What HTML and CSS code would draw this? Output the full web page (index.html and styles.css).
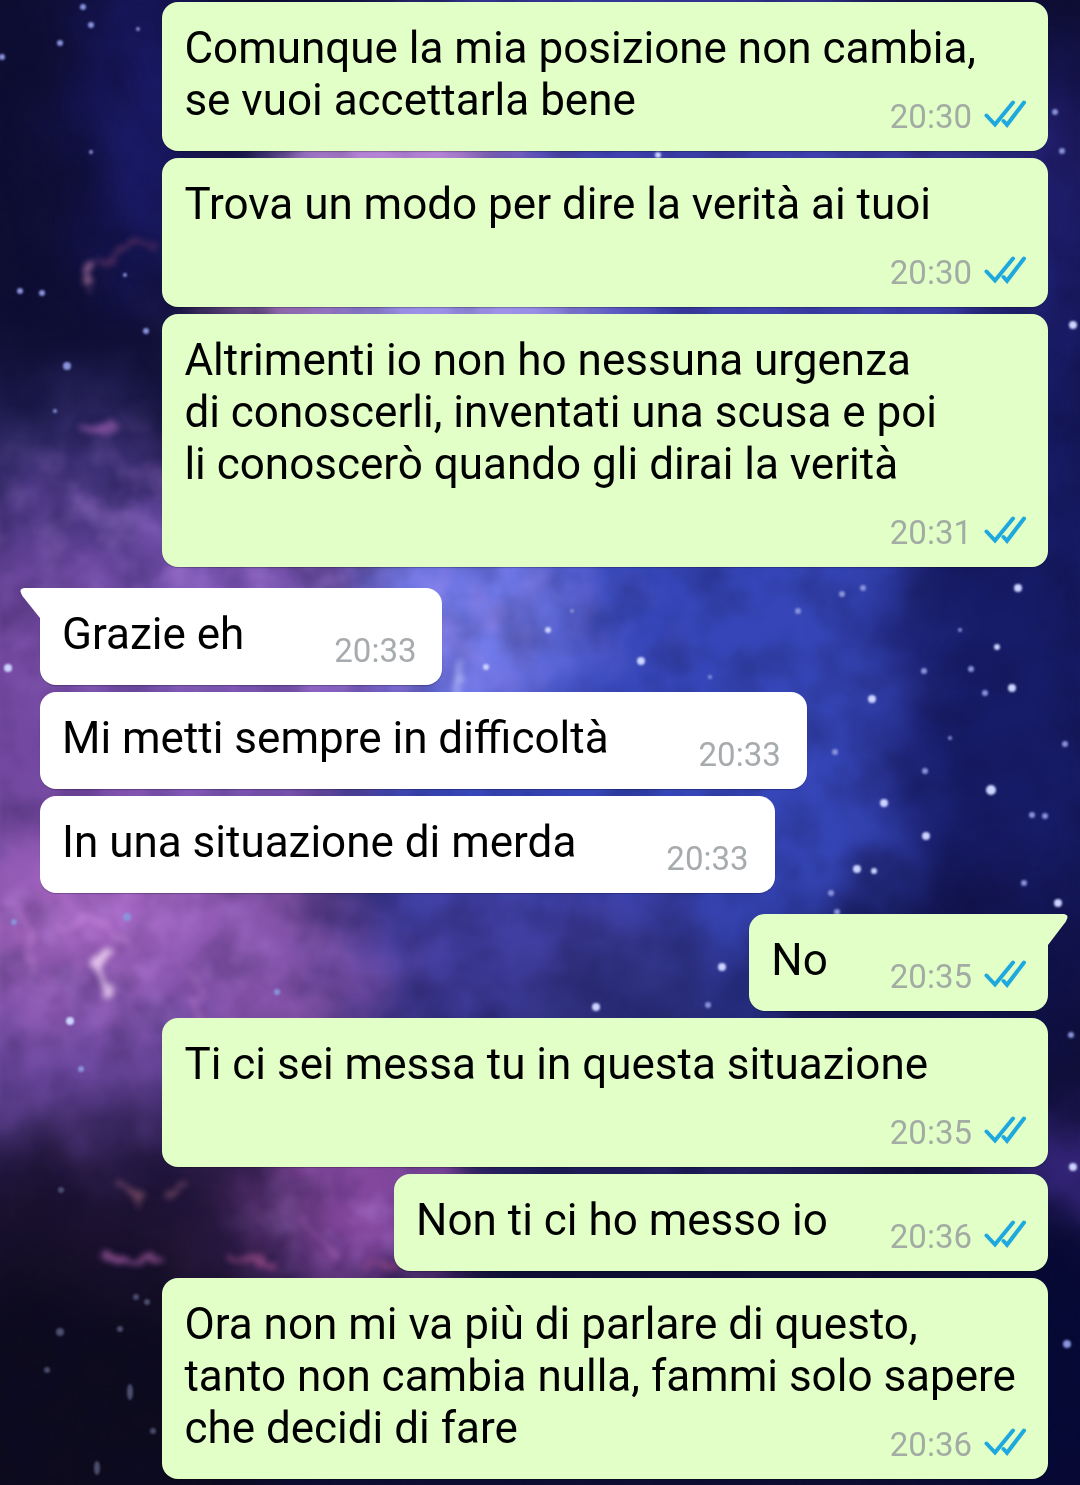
FILE: index.html
```html
<!DOCTYPE html>
<html lang="it">
<head>
    <meta charset="UTF-8">
    <meta name="viewport" content="width=device-width, initial-scale=1.0">
    <title>Chat</title>
    <link rel="stylesheet" href="styles.css">
</head>
<body>
    <svg class="wallpaper" viewBox="0 0 1080 1485" preserveAspectRatio="none" aria-hidden="true">
        <defs>
            <filter id="cloud" x="-20%" y="-20%" width="140%" height="140%" color-interpolation-filters="sRGB">
                <feGaussianBlur stdDeviation="38" result="soft"/>
                <feTurbulence type="fractalNoise" baseFrequency="0.014" numOctaves="4" seed="7" result="noise"/>
                <feDisplacementMap in="soft" in2="noise" scale="70" xChannelSelector="R" yChannelSelector="G" result="bent"/>
                <feGaussianBlur in="bent" stdDeviation="3"/>
            </filter>
            <filter id="wisp" x="-10%" y="-10%" width="120%" height="120%" color-interpolation-filters="sRGB">
                <feTurbulence type="fractalNoise" baseFrequency="0.05" numOctaves="3" seed="3" result="noise"/>
                <feDisplacementMap in="SourceGraphic" in2="noise" scale="30" xChannelSelector="R" yChannelSelector="G" result="bent"/>
                <feGaussianBlur in="bent" stdDeviation="3"/>
            </filter>
            <filter id="dust" x="0" y="0" width="100%" height="100%" color-interpolation-filters="sRGB">
                <feTurbulence type="fractalNoise" baseFrequency="0.02" numOctaves="5" seed="12"/>
                <feColorMatrix values="0 0 0 0 0.05  0 0 0 0 0.04  0 0 0 0 0.2  1.6 0 0 0 -0.6"/>
                <feGaussianBlur stdDeviation="2"/>
            </filter>
            <filter id="haze" x="0" y="0" width="100%" height="100%" color-interpolation-filters="sRGB">
                <feTurbulence type="fractalNoise" baseFrequency="0.03" numOctaves="4" seed="21"/>
                <feColorMatrix values="0 0 0 0 0.78  0 0 0 0 0.6  0 0 0 0 0.95  0 2.2 0 0 -0.9"/>
                <feGaussianBlur stdDeviation="2" result="light"/>
                <feComposite in="light" in2="SourceGraphic" operator="in"/>
            </filter>
            <filter id="glow" x="-10%" y="-10%" width="120%" height="120%">
                <feGaussianBlur stdDeviation="1"/>
            </filter>
            <radialGradient id="fade">
                <stop offset="0" stop-color="#fff"/>
                <stop offset="1" stop-color="#fff" stop-opacity="0"/>
            </radialGradient>
        </defs>
        <rect width="1080" height="1485" fill="#0e0e33"/>
        <g filter="url(#cloud)">
            <ellipse cx="145" cy="120" rx="50" ry="180" fill="#1c1c70"/>
            <ellipse cx="640" cy="220" rx="380" ry="260" fill="#3f41ae"/>
            <ellipse cx="1060" cy="250" rx="60" ry="200" fill="#1a1b66"/>
            <ellipse cx="400" cy="150" rx="130" ry="70" fill="#bd88d8"/>
            <ellipse cx="290" cy="310" rx="80" ry="60" fill="#b884d0"/>
            <ellipse cx="470" cy="320" rx="140" ry="80" fill="#a095ea"/>
            <ellipse cx="1020" cy="150" rx="160" ry="24" fill="#2a2378"/>
            <ellipse cx="690" cy="720" rx="340" ry="340" fill="#3646b8"/>
            <ellipse cx="1010" cy="680" rx="120" ry="360" fill="#171c68"/>
            <ellipse cx="450" cy="620" rx="130" ry="110" fill="#747cec"/>
            <ellipse cx="40" cy="430" rx="130" ry="50" fill="#29255f"/>
            <ellipse cx="120" cy="530" rx="160" ry="70" fill="#553e90"/>
            <ellipse cx="30" cy="730" rx="130" ry="180" fill="#7348a0"/>
            <ellipse cx="240" cy="680" rx="150" ry="170" fill="#8058b8"/>
            <ellipse cx="500" cy="950" rx="200" ry="90" fill="#4340a4"/>
            <ellipse cx="130" cy="950" rx="190" ry="120" fill="#a766c2"/>
            <ellipse cx="250" cy="970" rx="120" ry="90" fill="#8d58b2"/>
            <ellipse cx="60" cy="1070" rx="170" ry="70" fill="#6c489f"/>
            <ellipse cx="350" cy="1180" rx="120" ry="130" fill="#8648a0"/>
            <ellipse cx="650" cy="1120" rx="240" ry="90" fill="#262468"/>
            <ellipse cx="630" cy="985" rx="110" ry="36" fill="#272a70"/>
            <ellipse cx="940" cy="980" rx="180" ry="100" fill="#11124a"/>
            <ellipse cx="110" cy="1240" rx="180" ry="90" fill="#1c122f"/>
            <ellipse cx="230" cy="1230" rx="70" ry="50" fill="#2c1a40"/>
            <ellipse cx="50" cy="1420" rx="230" ry="150" fill="#0d0b1d"/>
            <ellipse cx="1070" cy="1168" rx="90" ry="26" fill="#5c3cc0"/>
            <ellipse cx="1060" cy="1380" rx="120" ry="140" fill="#050935"/>
        </g>
        <rect width="1080" height="1485" filter="url(#dust)" opacity="0.35"/>
        <g filter="url(#haze)" opacity="0.4">
            <ellipse cx="120" cy="950" rx="300" ry="150" fill="url(#fade)"/>
            <ellipse cx="300" cy="620" rx="420" ry="180" fill="url(#fade)"/>
            <ellipse cx="110" cy="500" rx="170" ry="110" fill="url(#fade)"/>
            <ellipse cx="350" cy="1220" rx="150" ry="90" fill="url(#fade)"/>
        </g>
        <g filter="url(#wisp)" fill="none" stroke-linecap="round" opacity="0.75">
            <path d="M100 262Q120 245 150 242" stroke="#6b3765" stroke-width="6"/>
            <path d="M88 282L94 270" stroke="#d68cb8" stroke-width="7"/>
            <path d="M80 432Q95 440 110 428" stroke="#a05fb4" stroke-width="7"/>
            <path d="M455 690Q462 670 465 665" stroke="#c1c8ff" stroke-width="7"/>
            <path d="M5 905Q40 920 35 970" stroke="#cd8fe0" stroke-width="6" opacity="0.5"/>
            <path d="M100 948Q104 975 110 995" stroke="#ffe6ff" stroke-width="9"/>
            <path d="M60 925Q100 910 125 945" stroke="#dda2ea" stroke-width="7" opacity="0.5"/>
            <path d="M190 970Q205 1000 198 1030" stroke="#bf7bd0" stroke-width="6" opacity="0.5"/>
            <path d="M116 1183Q130 1192 140 1198M172 1190L186 1186" stroke="#80506a" stroke-width="6"/>
            <path d="M104 1256Q125 1266 160 1260" stroke="#a95da8" stroke-width="7"/>
            <path d="M235 1260L265 1262M370 1266L395 1268" stroke="#9b4b88" stroke-width="7"/>
            <path d="M308 1215Q318 1240 335 1256" stroke="#b368bd" stroke-width="6" opacity="0.6"/>
        </g>
        <g fill="#8a93dc" filter="url(#glow)">
            <circle cx="83" cy="7" r="3"/><circle cx="91" cy="25" r="3"/><circle cx="138" cy="29" r="2"/>
            <circle cx="60" cy="43" r="3"/><circle cx="2" cy="57" r="3"/><circle cx="91" cy="152" r="2"/>
            <circle cx="20" cy="291" r="3"/><circle cx="42" cy="293" r="3"/><circle cx="125" cy="275" r="2"/>
            <circle cx="67" cy="366" r="4"/><circle cx="55" cy="411" r="2"/><circle cx="146" cy="331" r="3"/>
            <circle cx="572" cy="611" r="2"/><circle cx="710" cy="677" r="2"/><circle cx="798" cy="611" r="3"/>
            <circle cx="842" cy="594" r="3"/><circle cx="863" cy="588" r="3"/><circle cx="960" cy="630" r="2"/>
            <circle cx="924" cy="671" r="3"/><circle cx="971" cy="669" r="3"/><circle cx="985" cy="693" r="3"/>
            <circle cx="835" cy="752" r="3"/><circle cx="925" cy="771" r="3"/><circle cx="950" cy="738" r="2"/>
            <circle cx="831" cy="893" r="3"/><circle cx="837" cy="912" r="3"/><circle cx="1024" cy="883" r="3"/>
            <circle cx="1032" cy="815" r="3"/><circle cx="1045" cy="816" r="3"/><circle cx="1065" cy="744" r="3"/>
            <circle cx="912" cy="941" r="2"/><circle cx="946" cy="951" r="2"/><circle cx="974" cy="938" r="3"/>
            <circle cx="1055" cy="112" r="3"/><circle cx="1062" cy="151" r="3"/><circle cx="1071" cy="1035" r="3"/>
            <circle cx="1067" cy="1344" r="4"/><circle cx="14" cy="922" r="3"/><circle cx="127" cy="917" r="4"/>
            <circle cx="277" cy="992" r="3"/><circle cx="708" cy="1005" r="3"/><circle cx="81" cy="1069" r="3"/>
        </g>
        <g fill="#cdd4ff" filter="url(#glow)">
            <circle cx="8" cy="668" r="4"/><circle cx="486" cy="667" r="3"/><circle cx="641" cy="661" r="4"/>
            <circle cx="548" cy="630" r="3"/><circle cx="1018" cy="588" r="4"/><circle cx="997" cy="647" r="3"/>
            <circle cx="872" cy="699" r="4"/><circle cx="1012" cy="688" r="4"/><circle cx="884" cy="803" r="4"/>
            <circle cx="926" cy="836" r="4"/><circle cx="991" cy="790" r="5"/><circle cx="857" cy="869" r="4"/>
            <circle cx="874" cy="871" r="3"/><circle cx="1073" cy="325" r="4"/><circle cx="1058" cy="903" r="4"/>
            <circle cx="722" cy="967" r="4"/><circle cx="596" cy="1007" r="4"/><circle cx="70" cy="1021" r="4"/>
            <circle cx="1073" cy="1167" r="4"/><circle cx="658" cy="155" r="3"/>
        </g>
        <g fill="#4b4e6c" filter="url(#glow)">
            <circle cx="61" cy="1190" r="3"/><circle cx="136" cy="1297" r="3"/><circle cx="147" cy="1302" r="3"/>
            <circle cx="60" cy="1332" r="4"/><circle cx="120" cy="1329" r="3"/><circle cx="47" cy="1370" r="3"/>
            <circle cx="153" cy="1431" r="3"/>
            <ellipse cx="130" cy="1392" rx="3" ry="8"/><ellipse cx="97" cy="1468" rx="3" ry="7"/>
        </g>
    </svg>

    <!-- double tick shared by all sent messages -->
    <svg class="sprite" aria-hidden="true">
        <symbol id="ticks" viewBox="0 0 42 28">
            <path d="M2.5 15.5L11 24.5L29 2.5M19.5 21L23 24.8L40 2.5"/>
        </symbol>
    </svg>

    <main class="chat">
        <div class="message sent">
            Comunque la mia posizione non cambia, se vuoi accettarla bene
            <span class="meta"><time>20:30</time><svg class="ticks" role="img" aria-label="Letto"><use href="#ticks"/></svg></span>
        </div>
        <div class="message sent">
            Trova un modo per dire la verità ai tuoi
            <span class="meta"><time>20:30</time><svg class="ticks" role="img" aria-label="Letto"><use href="#ticks"/></svg></span>
        </div>
        <div class="message sent">
            Altrimenti io non ho nessuna urgenza<br>
            di conoscerli, inventati una scusa e poi<br>
            li conoscerò quando gli dirai la verità
            <span class="meta"><time>20:31</time><svg class="ticks" role="img" aria-label="Letto"><use href="#ticks"/></svg></span>
        </div>

        <div class="message received tail">
            Grazie eh
            <span class="meta"><time>20:33</time></span>
        </div>
        <div class="message received">
            Mi metti sempre in difficoltà
            <span class="meta"><time>20:33</time></span>
        </div>
        <div class="message received">
            In una situazione di merda
            <span class="meta"><time>20:33</time></span>
        </div>

        <div class="message sent tail">
            No
            <span class="meta"><time>20:35</time><svg class="ticks" role="img" aria-label="Letto"><use href="#ticks"/></svg></span>
        </div>
        <div class="message sent">
            Ti ci sei messa tu in questa situazione
            <span class="meta"><time>20:35</time><svg class="ticks" role="img" aria-label="Letto"><use href="#ticks"/></svg></span>
        </div>
        <div class="message sent">
            Non ti ci ho messo io
            <span class="meta"><time>20:36</time><svg class="ticks" role="img" aria-label="Letto"><use href="#ticks"/></svg></span>
        </div>
        <div class="message sent">
            Ora non mi va più di parlare di questo, tanto non cambia nulla, fammi solo sapere che decidi di fare
            <span class="meta"><time>20:36</time><svg class="ticks" role="img" aria-label="Letto"><use href="#ticks"/></svg></span>
        </div>
    </main>
</body>
</html>
```

FILE: styles.css
```css
* {
    box-sizing: border-box;
}
body {
    margin: 0;
    background: #0e0e33;
    font-family: Roboto, "Liberation Sans", sans-serif;
    min-height: 100vh;
}
.wallpaper {
    position: fixed;
    inset: 0;
    width: 100%;
    height: 100%;
    z-index: -1;
}
.sprite {
    display: none;
}
.chat {
    display: flex;
    flex-direction: column;
    gap: 7px;
    padding: 2px 32px 6px 40px;
}
.message {
    position: relative;
    display: flow-root;
    max-width: 82vw;
    padding: 20px 22px 17px;
    border-radius: 16px;
    box-shadow: 0 1px 1px rgba(0,0,0,0.25);
    color: #000;
    font-size: 44px;
    line-height: 52px;
}
.sent {
    align-self: flex-end;
    background: #e1ffc7;
}
.received {
    align-self: flex-start;
    background: #fff;
}
.meta {
    float: right;
    display: flex;
    align-items: center;
    gap: 12px;
    height: 60px;
    margin-left: 62px;
    padding-top: 26px;
    color: #a3aba5;
    font-size: 33px;
    line-height: 34px;
}
.received .meta {
    margin-left: 90px;
    padding-right: 4px;
    color: #a6abae;
}
.ticks {
    width: 42px;
    height: 28px;
    margin-bottom: 6px;
    fill: none;
    stroke: #1fa8de;
    stroke-width: 4;
    stroke-linecap: round;
}

/* first message of a group */
.tail {
    margin-top: 14px;
}
.tail::before {
    content: "";
    position: absolute;
    top: 0;
    width: 21px;
    height: 31px;
    background: inherit;
}
.received.tail {
    border-top-left-radius: 0;
}
.received.tail::before {
    left: -20px;
    clip-path: path("M21 0H4Q-1 1 1 5Q2 8 4 10L20 30H21Z");
}
.sent.tail {
    border-top-right-radius: 0;
}
.sent.tail::before {
    right: -20px;
    clip-path: path("M0 0H17Q22 1 20 5Q19 8 17 10L1 31H0Z");
}
```
